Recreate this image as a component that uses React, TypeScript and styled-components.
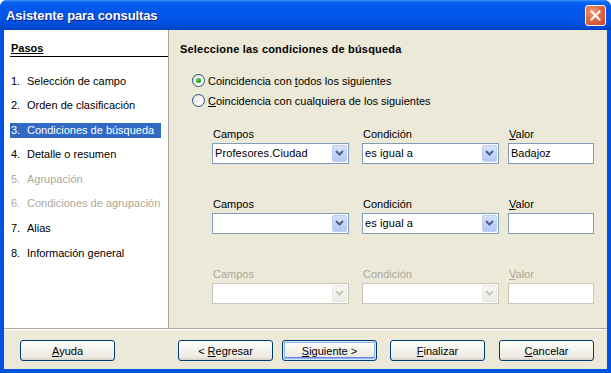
import { FC } from 'react'
import styled, { createGlobalStyle, css } from 'styled-components'

const GlobalStyle = createGlobalStyle`
	html, body {
		margin: 0;
		padding: 0;
		background: #ffffff;
	}

	body {
		font-family: 'Liberation Sans', Arial, sans-serif;
		font-size: 11px;
		color: #000000;
	}
`

const Window = styled.div`
	width: 611px;
	height: 373px;
	display: flex;
	flex-direction: column;
	background: #0053e2;
	border-radius: 7px 7px 0 0;
	overflow: hidden;
	box-sizing: border-box;
`

const TitleBar = styled.div`
	height: 30px;
	flex: none;
	display: flex;
	align-items: center;
	justify-content: space-between;
	padding: 0 5px 0 6px;
	box-sizing: border-box;
	background: linear-gradient(
		180deg,
		#3d95ff 0px,
		#0a66f0 2px,
		#0058ee 6px,
		#0055e9 14px,
		#0052e2 22px,
		#0049d2 27px,
		#003fc0 30px
	);
`

const TitleText = styled.span`
	color: #ffffff;
	font-family: 'Liberation Sans', Arial, sans-serif;
	font-weight: bold;
	font-size: 13px;
	letter-spacing: -0.1px;
	text-shadow: 1px 1px 0 #0a1f8a;
`

const CloseButton = styled.div`
	width: 21px;
	height: 21px;
	box-sizing: border-box;
	border: 1px solid #ffffff;
	border-radius: 3px;
	background: radial-gradient(circle at 35% 30%, #f29a7c 0%, #e06a45 45%, #c8431f 100%);
	display: flex;
	align-items: center;
	justify-content: center;
`

const Frame = styled.div`
	flex: 1;
	display: flex;
	flex-direction: column;
	margin: 0 4px 4px;
	background: #ece9d8;
	min-height: 0;
`

const Main = styled.div`
	flex: 1;
	display: flex;
	min-height: 0;
	border-bottom: 1px solid #aca899;
`

const Sidebar = styled.div`
	width: 165px;
	flex: none;
	background: #ffffff;
	border-right: 1px solid #aca899;
	box-sizing: border-box;
	padding: 11px 0 0 6px;
`

const SidebarTitle = styled.div`
	font-weight: bold;
	line-height: 14px;
	padding: 0 0 1px 1px;
	border-bottom: 1px solid #000000;
	text-decoration: underline;
	margin-bottom: 16.5px;
`

const StepList = styled.div`
	display: flex;
	flex-direction: column;
	gap: 9.6px;
`

const Step = styled.div<{ $active?: boolean; $disabled?: boolean }>`
	width: 151px;
	height: 15px;
	line-height: 15px;
	display: flex;
	padding-left: 1px;
	box-sizing: border-box;
	color: ${({ $disabled }) => ($disabled ? '#aca899' : '#000000')};

	${({ $active }) =>
		$active &&
		css`
			background: #316ac5;
			color: #ffffff;
		`}
`

const StepNumber = styled.span`
	width: 16px;
	flex: none;
`

const Content = styled.div`
	flex: 1;
	padding: 12px 0 0 11px;
	display: flex;
	flex-direction: column;
`

const Heading = styled.div`
	font-weight: bold;
	line-height: 14px;
	letter-spacing: 0.2px;
`

const RadioGroup = styled.div`
	display: flex;
	flex-direction: column;
	gap: 6px;
	margin: 17.5px 0 0 12px;
`

const RadioRow = styled.label`
	display: flex;
	align-items: center;
	gap: 3px;
	height: 14px;
`

const RadioCircle = styled.span<{ $checked?: boolean }>`
	width: 13px;
	height: 13px;
	box-sizing: border-box;
	border-radius: 50%;
	border: 1px solid #1c5180;
	background: linear-gradient(135deg, #dcdcd6 0%, #ffffff 70%);
	display: flex;
	align-items: center;
	justify-content: center;

	&::after {
		content: '';
		display: ${({ $checked }) => ($checked ? 'block' : 'none')};
		width: 5px;
		height: 5px;
		border-radius: 50%;
		background: radial-gradient(circle at 35% 35%, #55d551 0%, #21a121 60%, #1a8f1a 100%);
	}
`

const Conditions = styled.div`
	display: flex;
	flex-direction: column;
	gap: 33px;
	margin: 19px 0 0 32px;
`

const ConditionRow = styled.div`
	display: grid;
	grid-template-columns: 150px 146px 86px;
	align-items: end;
`

const Field = styled.div`
	display: flex;
	flex-direction: column;
	gap: 2px;
`

const FieldLabel = styled.span<{ $disabled?: boolean }>`
	line-height: 14px;
	padding-left: 1px;
	color: ${({ $disabled }) => ($disabled ? '#aca899' : '#000000')};
`

const ComboBox = styled.div<{ $disabled?: boolean }>`
	width: 137px;
	height: 21px;
	box-sizing: border-box;
	background: #ffffff;
	border: 1px solid ${({ $disabled }) => ($disabled ? '#c9c7ba' : '#7f9db9')};
	display: flex;
	align-items: center;
	justify-content: space-between;
	padding: 1px 1px 1px 2px;
`

const ComboValue = styled.span`
	font-size: 11px;
	line-height: 15px;
	letter-spacing: 0.1px;
`

const DropButton = styled.span<{ $disabled?: boolean }>`
	width: 15px;
	height: 17px;
	box-sizing: border-box;
	border-radius: 2px;
	display: flex;
	align-items: center;
	justify-content: center;
	border: 1px solid ${({ $disabled }) => ($disabled ? '#e8e8e3' : '#bccef8')};
	background: ${({ $disabled }) =>
		$disabled ? 'linear-gradient(180deg, #f7f7f4, #ebebe6)' : 'linear-gradient(180deg, #d6e2fc 0%, #b4c9f6 100%)'};
`

const TextBox = styled.div<{ $disabled?: boolean }>`
	width: 86px;
	height: 21px;
	box-sizing: border-box;
	background: #ffffff;
	border: 1px solid ${({ $disabled }) => ($disabled ? '#c9c7ba' : '#7f9db9')};
	padding: 2px 0 0 2px;
	line-height: 15px;
`

const Footer = styled.div`
	height: 40px;
	flex: none;
	display: flex;
	align-items: flex-start;
	justify-content: space-between;
	padding: 10px 13px 0 16px;
	box-sizing: border-box;
	border-top: 1px solid #ffffff;
`

const ButtonGroup = styled.div`
	display: flex;
`

const Button = styled.button<{ $focused?: boolean; $ml?: number }>`
	width: 95px;
	height: 21px;
	margin-left: ${({ $ml }) => $ml ?? 0}px;
	box-sizing: border-box;
	border: 1px solid #003c74;
	border-radius: 3px;
	background: linear-gradient(180deg, #ffffff 0%, #f5f4ef 40%, #eceae2 85%, #d6d0c5 100%);
	font-family: 'Liberation Sans', Arial, sans-serif;
	font-size: 11px;
	color: #000000;
	padding: 0;
	cursor: pointer;

	${({ $focused }) =>
		$focused &&
		css`
			box-shadow: inset 0 0 0 1px #cee7ff, inset 0 0 0 2px #98b8ea, inset 0 -1px 0 2px #6982ee;
		`}
`

const Key = styled.span`
	text-decoration: underline;
`

const Chevron: FC<{ disabled?: boolean }> = ({ disabled }) => (
	<svg width="9" height="6" viewBox="0 0 9 6">
		<path
			d="M1 1 L4.5 4.5 L8 1"
			fill="none"
			stroke={disabled ? '#c9c7ba' : '#4d6185'}
			strokeWidth="2"
		/>
	</svg>
)

const steps = [
	{ n: '1.', label: 'Selección de campo' },
	{ n: '2.', label: 'Orden de clasificación' },
	{ n: '3.', label: 'Condiciones de búsqueda', active: true },
	{ n: '4.', label: 'Detalle o resumen' },
	{ n: '5.', label: 'Agrupación', disabled: true },
	{ n: '6.', label: 'Condiciones de agrupación', disabled: true },
	{ n: '7.', label: 'Alias' },
	{ n: '8.', label: 'Información general' },
]

type ConditionProps = {
	field: string
	condition: string
	value: string
	disabled?: boolean
}

const Condition: FC<ConditionProps> = ({ field, condition, value, disabled }) => (
	<ConditionRow>
		<Field>
			<FieldLabel $disabled={disabled}>Campos</FieldLabel>
			<ComboBox $disabled={disabled}>
				<ComboValue>{field}</ComboValue>
				<DropButton $disabled={disabled}>
					<Chevron disabled={disabled} />
				</DropButton>
			</ComboBox>
		</Field>
		<Field>
			<FieldLabel $disabled={disabled}>Condición</FieldLabel>
			<ComboBox $disabled={disabled}>
				<ComboValue>{condition}</ComboValue>
				<DropButton $disabled={disabled}>
					<Chevron disabled={disabled} />
				</DropButton>
			</ComboBox>
		</Field>
		<Field>
			<FieldLabel $disabled={disabled}>
				<Key>V</Key>alor
			</FieldLabel>
			<TextBox $disabled={disabled}>{value}</TextBox>
		</Field>
	</ConditionRow>
)

const App: FC = () => {
	return (
		<>
			<GlobalStyle />
			<Window>
				<TitleBar>
					<TitleText>Asistente para consultas</TitleText>
					<CloseButton>
						<svg width="11" height="11" viewBox="0 0 11 11">
							<path d="M1.5 1.5 L9.5 9.5 M9.5 1.5 L1.5 9.5" stroke="#ffffff" strokeWidth="2" strokeLinecap="square" />
						</svg>
					</CloseButton>
				</TitleBar>
				<Frame>
					<Main>
						<Sidebar>
							<SidebarTitle>Pasos</SidebarTitle>
							<StepList>
								{steps.map((step) => (
									<Step key={step.n} $active={step.active} $disabled={step.disabled}>
										<StepNumber>{step.n}</StepNumber>
										{step.label}
									</Step>
								))}
							</StepList>
						</Sidebar>
						<Content>
							<Heading>Seleccione las condiciones de búsqueda</Heading>
							<RadioGroup>
								<RadioRow>
									<RadioCircle $checked />
									<span>
										Coincidencia con <Key>t</Key>odos los siguientes
									</span>
								</RadioRow>
								<RadioRow>
									<RadioCircle />
									<span>
										<Key>C</Key>oincidencia con cualquiera de los siguientes
									</span>
								</RadioRow>
							</RadioGroup>
							<Conditions>
								<Condition field="Profesores.Ciudad" condition="es igual a" value="Badajoz" />
								<Condition field="" condition="es igual a" value="" />
								<Condition field="" condition="" value="" disabled />
							</Conditions>
						</Content>
					</Main>
					<Footer>
						<Button>
							<Key>A</Key>yuda
						</Button>
						<ButtonGroup>
							<Button>
								&lt; <Key>R</Key>egresar
							</Button>
							<Button $ml={9} $focused>
								<Key>S</Key>iguiente &gt;
							</Button>
							<Button $ml={13}>
								<Key>F</Key>inalizar
							</Button>
							<Button $ml={14}>
								<Key>C</Key>ancelar
							</Button>
						</ButtonGroup>
					</Footer>
				</Frame>
			</Window>
		</>
	)
}

export default App
